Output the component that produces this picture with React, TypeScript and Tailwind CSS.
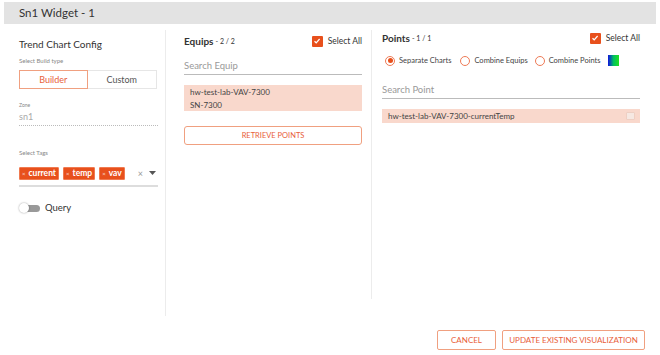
import React from "react";

const Check = () => (
  <span className="w-[11px] h-[11px] bg-[#e8501c] rounded-[1px] flex items-center justify-center">
    <svg width="8" height="8" viewBox="0 0 8 8"><path d="M1.5 4.2 L3.2 5.8 L6.6 2" stroke="white" strokeWidth="1.2" fill="none" /></svg>
  </span>
);

const Radio = ({ on }: { on?: boolean }) => (
  <span className="w-[10px] h-[10px] rounded-full border border-[#ee7a55] flex items-center justify-center">
    {on && <span className="w-[5px] h-[5px] rounded-full bg-[#e8501c]" />}
  </span>
);

const Tag = ({ t }: { t: string }) => (
  <span className="bg-[#e8501c] text-white text-[8.5px] font-bold h-[13px] px-[2px] flex items-center gap-[3px] rounded-[1px] border border-[#f07a50]">
    <span className="text-[6px] font-normal opacity-80">×</span>
    {t}
  </span>
);

export default function App() {
  return (
    <div className="w-[660px] h-[355px] bg-white relative overflow-hidden text-[#333]" style={{ fontFamily: "Lato, 'Open Sans', sans-serif" }}>
      <div className="mx-[4px] mt-[2px] h-[22px] bg-[#e3e3e3] flex items-center pl-[15px] text-[11.5px] text-[#333]">Sn1 Widget - 1</div>
      <div className="flex mx-[4px]">
        {/* Left */}
        <div className="w-[162px] border-r border-[#ececec] h-[286px] mt-[6px] pl-[15px] pr-[8px]">
          <div className="text-[10px] mt-[7px] leading-[14px]">Trend Chart Config</div>
          <div className="text-[6px] text-[#888] mt-[5px]">Select Build type</div>
          <div className="flex mt-[5px] h-[19px] text-[9px]">
            <div className="w-[69px] border border-[#f0a080] text-[#e8603a] flex items-center justify-center">Builder</div>
            <div className="w-[70px] border border-l-0 border-[#e6e6e6] flex items-center justify-center text-[#555]">Custom</div>
          </div>
          <div className="text-[5px] text-[#888] mt-[13px]">Zone</div>
          <div className="text-[9px] text-[#aaa] leading-[12px] mt-[1px]">sn1</div>
          <div className="border-b border-dotted border-[#bbb] mt-[2px] w-[139px]" />
          <div className="text-[6px] text-[#888] mt-[22px]">Select Tags</div>
          <div className="flex items-center mt-[10px] w-[139px]">
            <div className="flex gap-[4px]"><Tag t="current" /><Tag t="temp" /><Tag t="vav" /></div>
            <span className="ml-auto text-[9px] text-[#999] mr-[6px]">×</span>
            <svg width="7" height="4" viewBox="0 0 7 4" className="mr-[2px]"><path d="M0 0 L7 0 L3.5 4 Z" fill="#555" /></svg>
          </div>
          <div className="h-[2px] bg-[#ddd] mt-[5px] w-[139px]" />
          <div className="flex items-center mt-[14px] gap-[5px]">
            <span className="relative w-[21px] h-[10px] flex items-center">
              <span className="absolute left-[3px] w-[18px] h-[7px] rounded-full bg-[#999]" />
              <span className="absolute left-0 w-[10px] h-[10px] rounded-full bg-white shadow-[0_0_2px_rgba(0,0,0,0.4)]" />
            </span>
            <span className="text-[9.5px]">Query</span>
          </div>
        </div>
        {/* Middle */}
        <div className="w-[206px] border-r border-[#ececec] h-[269px] mt-[6px] pl-[18px] pr-[9px]">
          <div className="flex items-center mt-[4px] h-[14px]">
            <span className="text-[10px] font-bold">Equips</span>
            <span className="text-[7px] ml-[2px]">- 2 / 2</span>
            <span className="ml-auto flex items-center gap-[5px]"><Check /><span className="text-[8.5px]">Select All</span></span>
          </div>
          <div className="text-[9.5px] text-[#999] mt-[12px] leading-[12px]">Search Equip</div>
          <div className="h-px bg-[#bbb] mt-[2px]" />
          <div className="bg-[#f9d8cc] mt-[10px] h-[26px] text-[8px] pl-[6px] pt-[1px] leading-[13px] text-[#444]">
            <div>hw-test-lab-VAV-7300</div>
            <div>SN-7300</div>
          </div>
          <div className="mt-[15px] h-[19px] border border-[#f0a080] rounded-[3px] text-[#e8603a] text-[7.5px] flex items-center justify-center">RETRIEVE POINTS</div>
        </div>
        {/* Right */}
        <div className="flex-1 pl-[10px] pr-[16px] mt-[6px]">
          <div className="flex items-center mt-[1px] h-[14px]">
            <span className="text-[10px] font-bold">Points</span>
            <span className="text-[7px] ml-[2px]">- 1 / 1</span>
            <span className="ml-auto flex items-center gap-[5px]"><Check /><span className="text-[8.5px]">Select All</span></span>
          </div>
          <div className="flex items-center mt-[10px] text-[7.5px] text-[#444]">
            <span className="ml-[3px]"><Radio on /></span>
            <span className="ml-[4px]">Separate Charts</span>
            <span className="ml-[9px]"><Radio /></span>
            <span className="ml-[4px]">Combine Equips</span>
            <span className="ml-[7px]"><Radio /></span>
            <span className="ml-[4px]">Combine Points</span>
            <span className="ml-[7px] w-[11px] h-[11px] bg-[linear-gradient(90deg,#1010e0,#00c060,#20e020)]" />
          </div>
          <div className="text-[9.5px] text-[#999] mt-[18px] leading-[12px]">Search Point</div>
          <div className="h-px bg-[#bbb] mt-[2px]" />
          <div className="bg-[#f9d8cc] mt-[10px] h-[14px] text-[8px] pl-[6px] flex items-center text-[#444]">
            hw-test-lab-VAV-7300-currentTemp
            <span className="ml-auto mr-[5px] w-[9px] h-[8px] bg-[#f6e8e2] border border-[#eecfc3] rounded-[1px]" />
          </div>
        </div>
      </div>
      <div className="flex justify-end gap-[6px] mr-[15px] mt-[14px] text-[8px] text-[#e8603a]">
        <div className="w-[59px] h-[20px] border border-[#f0a080] rounded-[2px] flex items-center justify-center">CANCEL</div>
        <div className="w-[143px] h-[20px] border border-[#f0a080] rounded-[2px] flex items-center justify-center">UPDATE EXISTING VISUALIZATION</div>
      </div>
    </div>
  );
}
